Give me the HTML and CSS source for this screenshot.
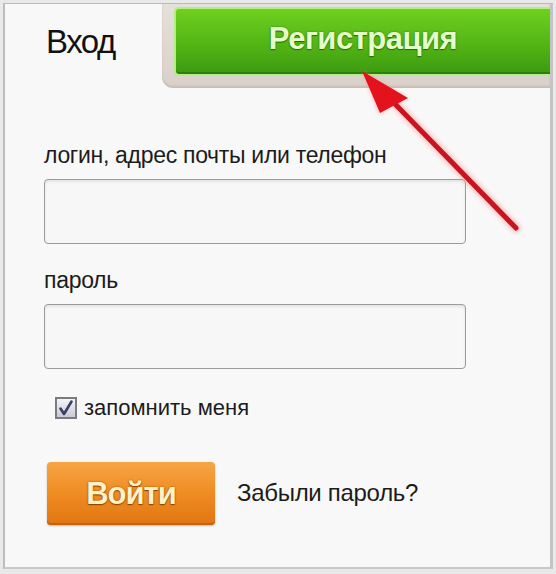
FILE: index.html
```html
<!DOCTYPE html>
<html lang="ru">
<head>
<meta charset="utf-8">
<link rel="stylesheet" href="styles.css">
</head>
<body>
<div class="card">
  <div class="tabs">
    <div class="tab-login">Вход</div>
    <div class="tab-frame">
      <div class="reg-btn">Регистрация</div>
    </div>
  </div>
  <form class="form">
    <label class="label">логин, адрес почты или телефон</label>
    <div class="input"></div>
    <label class="label label-pass">пароль</label>
    <div class="input"></div>
    <div class="remember">
      <span class="checkbox">
        <svg width="16" height="16" viewBox="0 0 16 16"><path d="M2.5 8.5 L6 14 L13.5 1.5" fill="none" stroke="#3a3f6a" stroke-width="2.6" stroke-linejoin="round" stroke-linecap="round"/></svg>
      </span>
      <span class="remember-text">запомнить меня</span>
    </div>
    <div class="actions">
      <div class="login-btn">Войти</div>
      <span class="forgot">Забыли пароль?</span>
    </div>
  </form>
  <svg class="arrow" width="556" height="574" viewBox="0 0 556 574">
    <defs>
      <filter id="glow" x="-20%" y="-20%" width="140%" height="140%">
        <feGaussianBlur stdDeviation="2"/>
      </filter>
    </defs>
    <g filter="url(#glow)" opacity="0.5">
      <line x1="398" y1="107" x2="516" y2="228" stroke="#ff8c8c" stroke-width="9" stroke-linecap="round"/>
      <polygon points="362,71 379,114 408,98" fill="#ff8c8c"/>
    </g>
    <line x1="396" y1="105" x2="516" y2="228" stroke="#c8141e" stroke-width="5" stroke-linecap="round"/>
    <polygon points="362,71 380,113 408,98" fill="#e3121c"/>
  </svg>
</div>
</body>
</html>
```
FILE: styles.css
```css
* { box-sizing: border-box; }
html, body { margin: 0; padding: 0; }
body {
  background: #e9e9e9;
  font-family: "Liberation Sans", Arial, sans-serif;
  color: #1a1a1a;
  width: 556px;
  height: 574px;
  overflow: hidden;
}
.card {
  position: relative;
  margin: 3px 0 0 3px;
  width: 550px;
  height: 566px;
  background: #f8f8f8;
  border: 1px solid #b9b9b9;
  border-right: 3px solid #c4c4c4;
  border-bottom: 2px solid #c9c9c9;
  border-left: 2px solid #bdbdbd;
  overflow: hidden;
}
.tabs {
  display: flex;
  align-items: flex-start;
  height: 84px;
}
.tab-login {
  padding: 18px 0 0 41px;
  font-size: 33px;
  line-height: 40px;
  letter-spacing: -1.5px;
  color: #111;
}
.tab-frame {
  margin-left: auto;
  width: 388px;
  height: 84px;
  padding: 3px 0 12px 12px;
  background: linear-gradient(#e6e0da, #d9d1c9);
  border-bottom-left-radius: 11px;
  box-shadow: inset 0 -2px 2px rgba(150,130,110,0.25);
}
.reg-btn {
  height: 69px;
  border: 2px solid #b3ee84;
  border-right: none;
  border-radius: 5px 0 0 5px;
  background: linear-gradient(#6fd01f, #52b515 55%, #3c9a10);
  box-shadow: inset 0 -2px 0 #2f7e0c;
  display: flex;
  align-items: center;
  justify-content: center;
  padding-bottom: 6px;
  font-size: 31px;
  font-weight: bold;
  letter-spacing: -0.5px;
  color: #e4ffc9;
  text-shadow: 0 1px 1px #2a6a08, 0 0 2px #2f7a0d;
}
.form {
  display: flex;
  flex-direction: column;
  align-items: flex-start;
  padding: 0 0 0 39px;
}
.label {
  margin-top: 53px;
  font-size: 23px;
  line-height: 28px;
  letter-spacing: -0.3px;
  color: #1c1c1c;
}
.label-pass { margin-top: 22px; }
.input {
  margin-top: 10px;
  width: 422px;
  height: 65px;
  border: 1px solid #9a9a9a;
  border-radius: 4px;
  background: #f7f7f7;
  box-shadow: inset 0 2px 3px rgba(0,0,0,0.08);
}
.remember {
  margin-top: 25px;
  padding-left: 11px;
  display: flex;
  align-items: center;
  gap: 7px;
}
.checkbox {
  width: 22px;
  height: 22px;
  border: 2px solid #7a7a80;
  background: linear-gradient(#f4f4f8, #c9cad6);
  display: flex;
  align-items: center;
  justify-content: center;
}
.remember-text {
  font-size: 22px;
  line-height: 28px;
  color: #1c1c1c;
}
.actions {
  margin-top: 40px;
  display: flex;
  align-items: center;
  gap: 22px;
}
.login-btn {
  width: 168px;
  height: 63px;
  margin-left: 3px;
  border-radius: 4px;
  background: linear-gradient(#f6a545, #ef8c22 50%, #e07612);
  box-shadow: inset 0 -2px 0 #c6620a, 0 1px 2px rgba(0,0,0,0.25);
  display: flex;
  align-items: center;
  justify-content: center;
  font-size: 31px;
  font-weight: bold;
  letter-spacing: -1px;
  color: #fff1c4;
  text-shadow: 0 1px 1px #8a4200, 0 0 2px #9a4a00;
}
.forgot {
  font-size: 24px;
  letter-spacing: -0.3px;
  color: #1c1c1c;
  padding-bottom: 2px;
}
.arrow {
  position: absolute;
  left: -5px;
  top: -4px;
  pointer-events: none;
}
```
